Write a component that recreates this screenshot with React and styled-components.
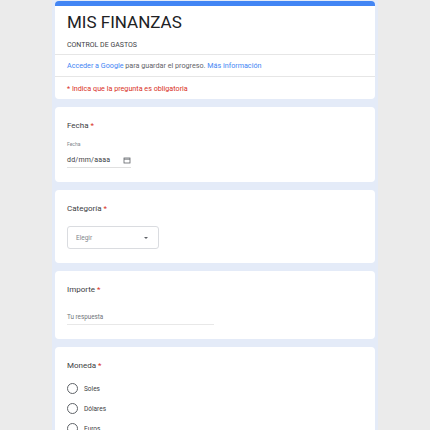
import React from 'react'
import styled, { createGlobalStyle } from 'styled-components'

const Global = createGlobalStyle`
  html, body {
    margin: 0;
    padding: 0;
    background: #ebebeb;
    font-family: Roboto, "Liberation Sans", Arial, sans-serif;
  }
`

const Page = styled.div`
  width: 430px;
  height: 430px;
  overflow: hidden;
  background: #ebebeb;
`

const Column = styled.div`
  width: 326px;
  margin-left: 52px;
  min-height: 430px;
  background: #e4ebf8;
  padding: 1px 3px 0;
  box-sizing: border-box;
  display: flex;
  flex-direction: column;
  gap: 8px;
`

const Card = styled.div`
  background: #fff;
  border-radius: 4px;
  padding: 13px 12px 14px;
  min-height: ${p => p.$h || 0}px;
  box-sizing: border-box;
`

const HeaderCard = styled.div`
  background: #fff;
  border-radius: 4px;
  border-top: 5px solid #4285f4;
  box-sizing: border-box;
`

const HeaderTop = styled.div`
  padding: 5px 12px 4px;
`

const FormTitle = styled.div`
  font-size: 17px;
  line-height: 22px;
  color: #202124;
`

const Subtitle = styled.div`
  font-size: 7px;
  line-height: 10px;
  margin-top: 7px;
  color: #3c4043;
`

const InfoRow = styled.div`
  border-top: 1px solid #e6e6e6;
  padding: 0 12px;
  height: ${p => (p.$red ? 22 : 21)}px;
  display: flex;
  align-items: center;
  font-size: 7.2px;
  color: ${p => (p.$red ? '#d93025' : '#5f6368')};
`

const Link = styled.span`
  color: #4285f4;
`

const Question = styled.div`
  font-size: 8px;
  line-height: 12px;
  color: #3c4043;
`

const Star = styled.span`
  color: #d93025;
`

const Small = styled.div`
  font-size: 5px;
  color: #80868b;
  margin-top: 9px;
`

const DateField = styled.div`
  width: 64px;
  height: 14px;
  margin-top: 6px;
  border-bottom: 1px solid #e0e0e0;
  display: flex;
  align-items: center;
  justify-content: space-between;
  font-size: 7px;
  color: #3c4043;
  letter-spacing: 0.2px;
`

const Select = styled.div`
  width: 92px;
  height: 23px;
  margin-top: 11px;
  border: 1px solid #dadce0;
  border-radius: 3px;
  box-sizing: border-box;
  display: flex;
  align-items: center;
  justify-content: space-between;
  padding: 0 10px 0 8px;
  font-size: 6.5px;
  color: #80868b;
`

const Caret = styled.span`
  width: 0;
  height: 0;
  border-left: 2.5px solid transparent;
  border-right: 2.5px solid transparent;
  border-top: 2.5px solid #5f6368;
`

const TextField = styled.div`
  width: 147px;
  margin-top: 17px;
  padding-bottom: 3px;
  border-bottom: 1px solid #e8e8e8;
  font-size: 6.3px;
  color: #70757a;
`

const Options = styled.div`
  display: flex;
  flex-direction: column;
  gap: 9px;
  margin-top: 11px;
`

const Option = styled.label`
  display: flex;
  align-items: center;
  gap: 6px;
  font-size: 6.5px;
  color: #3c4043;
`

const Radio = styled.span`
  width: 11px;
  height: 11px;
  border: 1.3px solid #5f6368;
  border-radius: 50%;
  box-sizing: border-box;
`

const CalendarIcon = () => (
  <svg width="8" height="7" viewBox="0 0 8 7">
    <rect x="1" y="1" width="6" height="5" fill="none" stroke="#5f6368" strokeWidth="0.8" />
    <line x1="1" y1="2.2" x2="7" y2="2.2" stroke="#5f6368" strokeWidth="0.8" />
  </svg>
)

export default function App() {
  return (
    <Page>
      <Global />
      <Column>
        <HeaderCard>
          <HeaderTop>
            <FormTitle>MIS FINANZAS</FormTitle>
            <Subtitle>CONTROL DE GASTOS</Subtitle>
          </HeaderTop>
          <InfoRow>
            <Link>Acceder a Google</Link>&nbsp;para guardar el progreso.&nbsp;<Link>Más información</Link>
          </InfoRow>
          <InfoRow $red>* Indica que la pregunta es obligatoria</InfoRow>
        </HeaderCard>

        <Card $h={75}>
          <Question>Fecha <Star>*</Star></Question>
          <Small>Fecha</Small>
          <DateField>
            <span>dd/mm/aaaa</span>
            <CalendarIcon />
          </DateField>
        </Card>

        <Card $h={73}>
          <Question>Categoría <Star>*</Star></Question>
          <Select>
            <span>Elegir</span>
            <Caret />
          </Select>
        </Card>

        <Card $h={67}>
          <Question>Importe <Star>*</Star></Question>
          <TextField>Tu respuesta</TextField>
        </Card>

        <Card $h={100}>
          <Question>Moneda <Star>*</Star></Question>
          <Options>
            <Option><Radio />Soles</Option>
            <Option><Radio />Dólares</Option>
            <Option><Radio />Euros</Option>
          </Options>
        </Card>
      </Column>
    </Page>
  )
}
